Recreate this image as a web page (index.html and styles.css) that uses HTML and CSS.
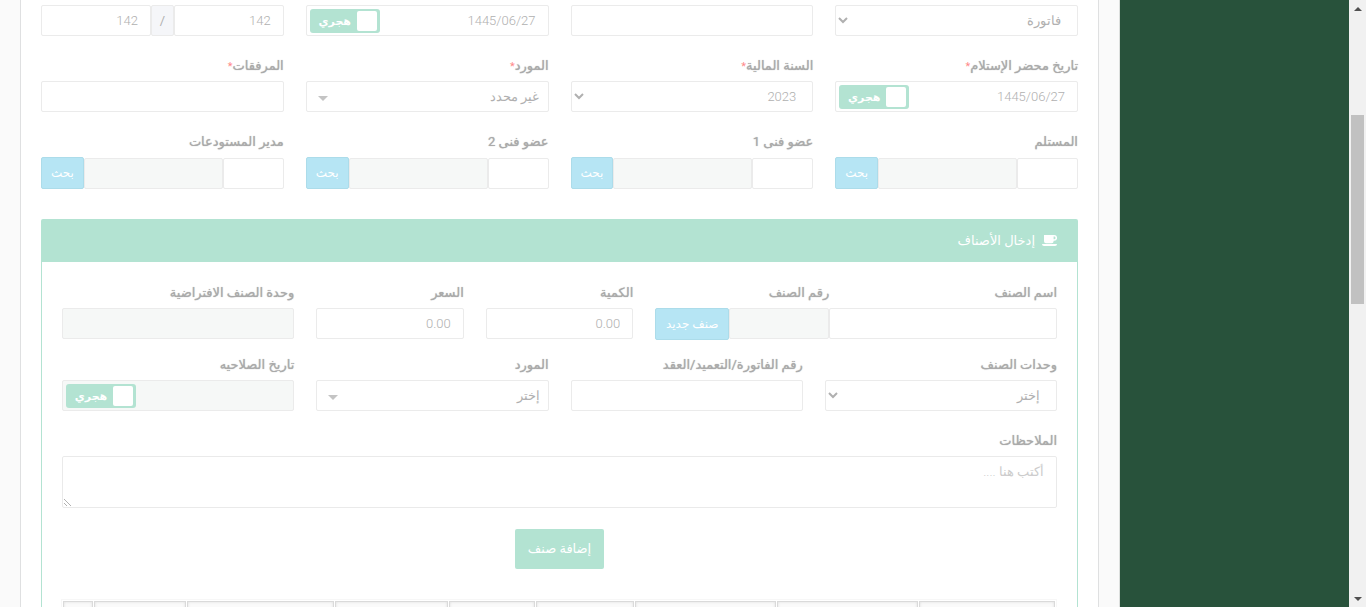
FILE: index.html
```html
<!DOCTYPE html>
<html lang="ar" dir="rtl">
<head>
<meta charset="utf-8">
<title>إدخال الأصناف</title>
<link rel="stylesheet" href="styles.css">
</head>
<body>
<div class="page">
  <div class="scrollbar" aria-hidden="true">
    <span class="scroll-arrow up"></span>
    <span class="scroll-track"><span class="scroll-thumb"></span></span>
    <span class="scroll-arrow down"></span>
  </div>
  <aside class="sidebar"></aside>
  <main class="content">
    <form class="card">
      <div class="row">
        <div class="field span-3">
          <select class="control" aria-label="نوع المستند"><option>فاتورة</option></select>
        </div>
        <div class="field span-3"><input class="control" type="text" aria-label="رقم المستند"></div>
        <div class="field span-3">
          <div class="date-box">
            <input class="control" type="text" value="1445/06/27" aria-label="التاريخ">
            <label class="switch"><input type="checkbox" checked><span>هجري</span></label>
          </div>
        </div>
        <div class="field span-3">
          <div class="group">
            <input class="control grow" type="text" value="142" aria-label="الرقم">
            <span class="addon">/</span>
            <input class="control grow" type="text" value="142" aria-label="الرقم الفرعي">
          </div>
        </div>
      </div>

      <div class="row">
        <div class="field span-3">
          <label class="caption" for="receipt">تاريخ محضر الإستلام<span class="required">*</span></label>
          <div class="date-box">
            <input class="control" id="receipt" type="text" value="1445/06/27">
            <label class="switch"><input type="checkbox" checked><span>هجري</span></label>
          </div>
        </div>
        <div class="field span-3">
          <label class="caption" for="year">السنة المالية<span class="required">*</span></label>
          <select class="control" id="year"><option>2023</option></select>
        </div>
        <div class="field span-3">
          <label class="caption" for="supplier">المورد<span class="required">*</span></label>
          <div class="picker"><select class="control" id="supplier"><option>غير محدد</option></select></div>
        </div>
        <div class="field span-3">
          <label class="caption" for="files">المرفقات<span class="required">*</span></label>
          <input class="control" id="files" type="text">
        </div>
      </div>

      <div class="row">
        <div class="field span-3">
          <label class="caption" for="receiver">المستلم</label>
          <div class="group">
            <input class="control code" id="receiver" type="text">
            <input class="control grow" type="text" disabled aria-label="اسم المستلم">
            <button class="btn info" type="button">بحث</button>
          </div>
        </div>
        <div class="field span-3">
          <label class="caption" for="member1">عضو فنى 1</label>
          <div class="group">
            <input class="control code" id="member1" type="text">
            <input class="control grow" type="text" disabled aria-label="اسم العضو 1">
            <button class="btn info" type="button">بحث</button>
          </div>
        </div>
        <div class="field span-3">
          <label class="caption" for="member2">عضو فنى 2</label>
          <div class="group">
            <input class="control code" id="member2" type="text">
            <input class="control grow" type="text" disabled aria-label="اسم العضو 2">
            <button class="btn info" type="button">بحث</button>
          </div>
        </div>
        <div class="field span-3">
          <label class="caption" for="manager">مدير المستودعات</label>
          <div class="group">
            <input class="control code" id="manager" type="text">
            <input class="control grow" type="text" disabled aria-label="اسم المدير">
            <button class="btn info" type="button">بحث</button>
          </div>
        </div>
      </div>

      <section class="panel">
        <h2 class="panel-head">
          <svg class="cup" viewBox="0 0 15 12" aria-hidden="true"><path fill-rule="evenodd" d="M2 0H12.2A2.8 2.8 0 0 1 12.2 5.8H11.6V6.2A2 2 0 0 1 9.6 8.200H4A2 2 0 0 1 2 6.200ZM11.600 1.600V4.200H12.200A1.300 1.300 0 0 0 12.200 1.600ZM0 9H15A2 2 0 0 1 13 11H2A2 2 0 0 1 0 9Z"/></svg>
          <span>إدخال الأصناف</span>
        </h2>
        <div class="panel-body">
          <div class="row tight">
            <div class="pair span-5">
              <div class="field item-name">
                <label class="caption" for="item">اسم الصنف</label>
                <input class="control" id="item" type="text">
              </div>
              <div class="field item-code">
                <label class="caption" for="code">رقم الصنف</label>
                <div class="group top">
                  <input class="control grow" id="code" type="text" disabled>
                  <button class="btn info" type="button">صنف جديد</button>
                </div>
              </div>
            </div>
            <div class="field span-2">
              <label class="caption" for="qty">الكمية</label>
              <input class="control" id="qty" type="text" value="0.00">
            </div>
            <div class="field span-2">
              <label class="caption" for="price">السعر</label>
              <input class="control" id="price" type="text" value="0.00">
            </div>
            <div class="field span-3">
              <label class="caption" for="unit">وحدة الصنف الافتراضية</label>
              <input class="control" id="unit" type="text" disabled>
            </div>
          </div>

          <div class="row">
            <div class="field span-3">
              <label class="caption" for="units">وحدات الصنف</label>
              <select class="control" id="units"><option>إختر</option></select>
            </div>
            <div class="field span-3">
              <label class="caption" for="invoice">رقم الفاتورة/التعميد/العقد</label>
              <input class="control" id="invoice" type="text">
            </div>
            <div class="field span-3">
              <label class="caption" for="vendor">المورد</label>
              <div class="picker"><select class="control" id="vendor"><option>إختر</option></select></div>
            </div>
            <div class="field span-3">
              <label class="caption" for="expiry">تاريخ الصلاحيه</label>
              <div class="date-box">
                <input class="control" id="expiry" type="text" disabled>
                <label class="switch"><input type="checkbox" checked><span>هجري</span></label>
              </div>
            </div>
          </div>

          <div class="field">
            <label class="caption" for="notes">الملاحظات</label>
            <textarea class="control notes" id="notes" placeholder="أكتب هنا ...."></textarea>
          </div>

          <div class="actions"><button class="btn add" type="button">إضافة صنف</button></div>

          <table class="items">
            <colgroup><col class="w-136"><col class="w-141"><col class="w-141"><col class="w-98"><col class="w-86"><col class="w-113"><col class="w-147"><col class="w-92"><col class="w-30"></colgroup>
            <tbody><tr><td></td><td></td><td></td><td></td><td></td><td></td><td></td><td></td><td></td></tr></tbody>
          </table>
        </div>
      </section>
    </form>
  </main>
</div>
</body>
</html>
```
FILE: styles.css
```css
* { box-sizing: border-box; }

body {
  margin: 0;
  background: #fafafa;
  color: #b0b0b0;
  font: 13px/21px Roboto, "DejaVu Sans", sans-serif;
}

input, select, textarea, button { font: inherit; color: inherit; }

.page {
  display: flex;
  height: 100vh;
  overflow: hidden;
}

.scrollbar {
  display: flex;
  flex: none;
  flex-direction: column;
  align-items: center;
  width: 17px;
  padding: 7px 0 6px;
  background: #f1f1f1;
}
.scroll-arrow { border: 4px solid transparent; }
.scroll-arrow.up { border-top: 0; border-bottom-color: #505050; }
.scroll-arrow.down { border-bottom: 0; border-top-color: #505050; }
.scroll-track { flex: 1; padding-top: 104px; }
.scroll-thumb { display: block; width: 13px; height: 189px; background: #c1c1c1; }

.sidebar { flex: none; width: 229px; background: #28523b; }

.content {
  flex: 1;
  min-width: 0;
  padding: 0 20px;
  border-right: 1px solid #dcdfdd;
}

.card {
  padding: 5px 20px 0;
  background: #fff;
  border: solid #dfe0e1;
  border-width: 0 1px;
}

.row {
  display: grid;
  grid-template-columns: repeat(12, minmax(0, 1fr));
  column-gap: 22px;
  margin-bottom: 19px;
}
.row.tight { margin-bottom: 14px; }
.span-2 { grid-column: span 2; }
.span-3 { grid-column: span 3; }
.span-5 { grid-column: span 5; }

.caption {
  display: block;
  margin-bottom: 5px;
  color: #aaa;
  font-size: 13px;
  font-weight: normal;
  text-shadow: 0 0 1px #aaa;
  white-space: nowrap;
}
.required { color: #ff8a8a; font-size: 11px; line-height: 1; text-shadow: none; }

.control {
  display: block;
  width: 100%;
  min-width: 0;
  height: 31px;
  padding: 0 12px;
  background: #fff;
  border: 1px solid #ebebeb;
  border-radius: 2px;
  outline: 0;
  font-size: 13px;
  font-weight: 300;
}
.control:disabled { background: #f6f8f7; }

.group { display: flex; align-items: flex-end; }
.group.top { align-items: flex-start; }
.group .grow { flex: 1; }
.group .code { flex: none; width: 61px; }
.addon {
  width: 23px;
  height: 31px;
  background: #f5f6f9;
  border: 1px solid #ebebeb;
  border-radius: 2px;
  line-height: 29px;
  text-align: center;
}

.btn { padding: 0; border: 0; border-radius: 2px; color: #fff; white-space: nowrap; }
.info {
  height: 32px;
  padding: 0 9px;
  background: #b6e5f4;
  border: 1px solid #acdcea;
  font-size: 12px;
}

.date-box, .picker { position: relative; }
.switch {
  position: absolute;
  top: 4px;
  left: 4px;
  display: flex;
  align-items: center;
  width: 70px;
  height: 24px;
  padding: 2px 3px;
  background: #b3e3d2;
  border-radius: 3px;
  color: #fff;
  font-size: 11px;
  font-weight: bold;
}
.switch input {
  appearance: none;
  width: 20px;
  height: 20px;
  margin: 0;
  background: #fff;
  border-radius: 2px;
}
.switch span { flex: 1; text-align: center; }

.picker .control { appearance: none; padding: 0 8px; }
.picker::after {
  position: absolute;
  top: 15px;
  left: 12px;
  border: 5px solid transparent;
  border-top-color: #c4c4c4;
  border-bottom: 0;
  content: "";
}

.panel { margin-top: 30px; }
.panel-head {
  display: flex;
  align-items: center;
  gap: 7px;
  height: 43px;
  margin: 0;
  padding: 0 21px;
  background: #b3e3d2;
  border-radius: 2px 2px 0 0;
  color: #fff;
  font-size: 13px;
  font-weight: normal;
}
.cup { width: 15px; height: 12px; fill: #fff; }
.panel-body {
  padding: 20px 20px 0;
  border: solid #b3e3d2;
  border-width: 0 1px;
}

.pair { display: flex; }
.item-name { flex: 1; }
.item-code { width: 174px; }
.item-code .btn { width: 74px; padding: 0; }

.notes {
  height: 52px;
  padding: 4px 12px;
  border-color: #d7d7d7;
  opacity: 0.5;
  resize: both;
}
.notes::placeholder { color: #9a9a9a; }

.actions { display: flex; justify-content: center; margin: 21px 0 30px; }
.add {
  height: 40px;
  padding: 0 13px 2px;
  background: #b3e3d2;
  font-size: 13px;
}

.items {
  width: 100%;
  table-layout: fixed;
  border: 1px solid #f7f7f7;
  border-spacing: 1px;
}
.items td {
  height: 40px;
  background: #fafafa;
  border: 1px solid #dadada;
  box-shadow: inset 0 0 3px #dedede;
}
.w-136 { width: 136px; }
.w-141 { width: 141px; }
.w-98 { width: 98px; }
.w-86 { width: 86px; }
.w-113 { width: 113px; }
.w-147 { width: 147px; }
.w-92 { width: 92px; }
.w-30 { width: 30px; }
```
